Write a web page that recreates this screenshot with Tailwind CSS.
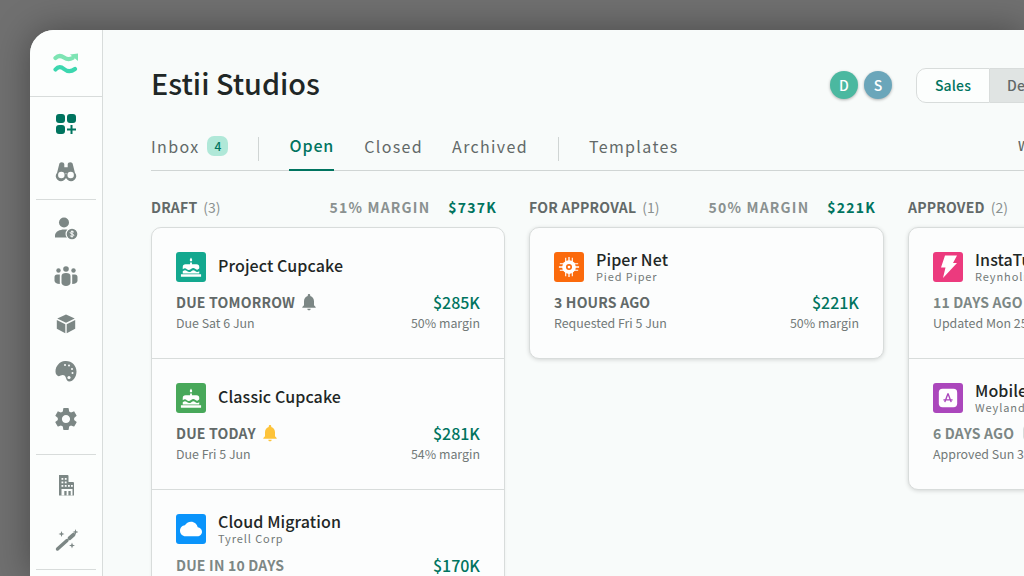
<!DOCTYPE html>
<html lang="en">
<head>
<meta charset="utf-8">
<title>Estii Studios</title>
<script src="https://cdn.jsdelivr.net/npm/@tailwindcss/browser@4"></script>
</head>
<body class="m-0 w-[1024px] h-[576px] overflow-hidden bg-[#707070] font-['Noto_Sans_CJK_SC','Noto_Sans',sans-serif]">
<div class="pl-[30px] pt-[30px] w-[1024px] h-[576px]">
  <div class="w-[994px] h-[546px] flex rounded-tl-[24px] bg-[#f8fbfa] shadow-[0_0_36px_rgba(0,0,0,0.35)] overflow-hidden">
    <!-- sidebar -->
    <aside class="w-[73px] shrink-0 bg-[#fcfefd] border-r border-[#d8dcdb] flex flex-col">
      <div class="h-[67px] shrink-0 border-b border-[#d8dcdb] flex items-center justify-center">
        <svg class="w-[26px] h-6" viewBox="0 0 26 24" fill="none" stroke-linecap="round">
          <path d="M2.500 7C5 4.500 8 4.500 11 6.500s5 2.500 8.500.5" stroke="#7de4b3" stroke-width="4.200"/>
          <path d="M17 3.500 25 2.500V10z" fill="#7de4b3"/>
          <path d="M2.500 18.500C5 15.500 8 15.500 11 18s7 3 11 0" stroke="#3cd7af" stroke-width="4.200"/>
        </svg>
      </div>
      <div class="flex flex-col items-center pt-[15px]">
        <svg class="w-6 h-6" viewBox="0 0 24 24" fill="#00745f">
          <rect x="2" y="2" width="9" height="9" rx="3"/><rect x="13" y="2" width="9" height="9" rx="3"/><rect x="2" y="13" width="9" height="9" rx="3"/>
          <path d="M16.500 13h2v3.500H22v2h-3.500V22h-2v-3.500H13v-2h3.500z"/>
        </svg>
        <svg class="w-6 h-6 mt-[23px]" viewBox="0 0 24 24" fill="#7c8785">
          <g transform="translate(1.800 1.500) scale(.85)">
            <path d="M4 4.500C4 3 5.500 2 7 2s3 1 3 2.500V8h4V4.500C14 3 15.500 2 17 2s3 1 3 2.500L22.500 14.500A6 6 0 1 1 12.800 15h-1.600A6 6 0 1 1 1.500 14.500z"/>
            <circle cx="6.500" cy="17" r="3.800" fill="#fcfefd"/><circle cx="17.500" cy="17" r="3.800" fill="#fcfefd"/>
          </g>
        </svg>
        <div class="w-[60px] h-px bg-[#d8dcdb] mt-4"></div>
        <svg class="w-6 h-6 mt-4" viewBox="0 0 24 24" fill="#7c8785">
          <circle cx="10" cy="6.500" r="5"/><path d="M1 21.500v-2C1 15.500 6 13.500 10 13.500s5 .5 6 1L13 21.500z"/>
          <circle cx="18" cy="18" r="6.500" fill="#fcfefd"/><circle cx="18" cy="18" r="5.300"/>
          <path d="M20 16.300c-.5-.8-3.500-1.100-3.800.3-.3 1.600 3.700.9 3.600 2.700-.1 1.400-3.200 1.300-3.900.3M18 14.500v7" stroke="#fcfefd" stroke-width="1" fill="none"/>
        </svg>
        <svg class="w-6 h-6 mt-6" viewBox="0 0 24 24" fill="#7c8785">
          <circle cx="12" cy="5" r="2.800"/><circle cx="4.500" cy="6.500" r="2.200"/><circle cx="19.500" cy="6.500" r="2.200"/>
          <path d="M7.500 12c0-2 1.500-3 4.500-3s4.500 1 4.500 3v6.500c0 2-2 3.500-4.500 3.500s-4.500-1.500-4.500-3.500z"/>
          <path d="M5.800 10.500H3C1.500 10.500.5 11.500.5 13v3.500c0 2 2 3.500 5.300 3.500z"/>
          <path d="M18.200 10.500H21c1.500 0 2.500 1 2.500 2.500v3.500c0 2-2 3.500-5.300 3.500z"/>
        </svg>
        <svg class="w-6 h-6 mt-6" viewBox="0 0 24 24" fill="#7c8785">
          <g transform="translate(1.500 1.500) scale(.875)">
            <path d="M12 1 22 5.800 12 10.600 2 5.800z"/>
            <path d="M1.500 7.500v10l9.700 5V12.200z"/>
            <path d="M22.500 7.500v10l-9.700 5V12.200z"/>
          </g>
        </svg>
        <svg class="w-6 h-6 mt-[23px]" viewBox="0 0 24 24" fill="#7c8785">
          <path d="M11 2c6.500-.5 11.500 4.500 11.500 10.500 0 5.500-3.500 10-7 10-2.500 0-3-2-3.500-3.500-.6-1.800-1.500-3-3.300-3-1.500 0-2.500 1.200-4.200 1.200C2.800 16.700 1.500 15 1.500 12.500 1.500 7 5.500 2.500 11 2z"/>
          <circle cx="11" cy="6" r="1" fill="#fcfefd"/><circle cx="15" cy="6.500" r="1" fill="#fcfefd"/><circle cx="18" cy="10" r="1" fill="#fcfefd"/><circle cx="18.500" cy="14" r="1" fill="#fcfefd"/><circle cx="15" cy="18.500" r="1.600" fill="#fcfefd"/>
        </svg>
        <svg class="w-6 h-6 mt-6" viewBox="0 0 24 24" fill="#7c8785">
          <path d="M19.140 12.940c.04-.3.06-.61.06-.94 0-.32-.02-.64-.07-.94l2.030-1.580c.18-.14.23-.41.12-.61l-1.920-3.320c-.12-.22-.37-.29-.59-.22l-2.390.96c-.5-.38-1.030-.7-1.620-.94l-.36-2.540c-.04-.24-.24-.41-.48-.41h-3.840c-.24 0-.43.17-.47.41l-.36 2.540c-.59.24-1.130.57-1.620.94l-2.390-.96c-.22-.08-.47 0-.59.22L2.740 8.870c-.12.21-.08.47.12.61l2.030 1.580c-.05.3-.09.63-.09.94s.02.64.07.94l-2.030 1.580c-.18.14-.23.41-.12.61l1.920 3.320c.12.22.37.29.59.22l2.390-.96c.5.38 1.030.7 1.620.94l.36 2.540c.05.24.24.41.48.41h3.840c.24 0 .44-.17.47-.41l.36-2.540c.59-.24 1.130-.56 1.620-.94l2.390.96c.22.08.47 0 .59-.22l1.920-3.320c.12-.22.07-.47-.12-.61l-2.010-1.580zM12 15.600c-1.980 0-3.600-1.620-3.600-3.600s1.620-3.600 3.600-3.600 3.600 1.620 3.600 3.600-1.620 3.600-3.600 3.600z" transform="translate(-1.700 -1.700) scale(1.140)"/>
        </svg>
        <div class="w-[60px] h-px bg-[#d8dcdb] mt-[23px]"></div>
        <svg class="w-6 h-6 mt-[18px]" viewBox="0 0 24 24" fill="#7c8785">
          <path d="M5 2h8.500a1 1 0 0 1 1 1v6H19a1 1 0 0 1 1 1v12.500H5z"/>
          <g fill="#fcfefd">
            <rect x="7.500" y="5" width="1.800" height="1.800"/><rect x="10.800" y="5" width="1.800" height="1.800"/><rect x="7.500" y="8.500" width="1.800" height="1.800"/><rect x="10.800" y="8.500" width="1.800" height="1.800"/><rect x="7.500" y="12" width="1.800" height="1.800"/><rect x="10.800" y="12" width="1.800" height="1.800"/><rect x="14" y="12" width="1.800" height="1.800"/><rect x="17" y="12" width="1.800" height="1.800"/>
            <path d="M7.500 16h11v6.500h-1.800V18h-2.300v4.500h-1.800V18h-2.300v4.500H7.500z"/>
          </g>
        </svg>
        <svg class="w-6 h-6 mt-[31px]" viewBox="0 0 24 24" fill="#7c8785">
          <path d="M3.500 21 13 12.500" stroke="#7c8785" stroke-width="3.400" stroke-linecap="round" fill="none"/>
          <path d="M15.500 10.300 19.500 6.800" stroke="#7c8785" stroke-width="3.800" stroke-linecap="round" fill="none"/>
          <path d="M7.500 3 8.300 5.200 10.500 6 8.300 6.800 7.500 9 6.700 6.800 4.500 6 6.700 5.200zM21.500 1l.7 2.300 2.300.7-2.300.7-.7 2.300-.7-2.300L18.500 4l2.300-.7zM18 14.500l.8 2.200 2.200.8-2.200.8-.8 2.200-.8-2.200-2.200-.8 2.200-.8z"/>
        </svg>
        <div class="w-[60px] h-px bg-[#d8dcdb] mt-[17px]"></div>
      </div>
    </aside>

    <!-- main -->
    <main class="w-[921px] shrink-0 pl-12 overflow-hidden">
      <header class="h-[38px] mt-[34px] flex items-center">
        <h1 class="m-0 text-[28.8px] leading-[38px] font-medium text-[#1f2726]">Estii Studios</h1>
        <div class="ml-auto mt-1 flex gap-[6px] mr-[24px]">
          <div class="w-7 h-7 rounded-full bg-[#4bb8a0] text-white text-sm font-medium flex items-center justify-center shadow-[0_1px_3px_rgba(0,0,0,0.3)]">D</div>
          <div class="w-7 h-7 rounded-full bg-[#6ba6ba] text-white text-sm font-medium flex items-center justify-center shadow-[0_1px_3px_rgba(0,0,0,0.3)]">S</div>
        </div>
        <div class="w-[108px] mt-1 shrink-0 flex overflow-hidden">
          <div class="w-[74px] h-[35px] shrink-0 flex items-center justify-center rounded-l-[10px] border border-[#d8dcdb] bg-[#fcfefd] text-[14px] tracking-[0.15px] font-medium text-[#00745f]">Sales</div>
          <div class="w-[80px] h-[35px] shrink-0 pl-[17px] flex items-center border-y border-[#d8dcdb] bg-[#e0e4e3] text-[14px] tracking-[0.15px] font-medium text-[#626968]">Delivery</div>
        </div>
      </header>

      <nav class="h-[45px] mt-6 flex items-stretch border-b border-[#d0d5d4] text-[16px] tracking-[1.35px] text-[#626968] font-normal">
        <div class="flex items-center pb-[5px]">Inbox<span class="ml-[8px] w-[21px] h-[20px] rounded-[7px] bg-[#b0e8d8] text-[12px] font-medium text-[#00745f] tracking-normal flex items-center justify-center">4</span></div>
        <div class="w-px h-[24px] mt-[11px] bg-[#d0d5d4] ml-[30px] mr-[30px]"></div>
        <div class="flex items-center pb-[5px] -mb-px border-b-2 border-[#00745f] text-[#00745f] font-medium tracking-[0.9px]">Open</div>
        <div class="flex items-center pb-[5px] ml-[30px]">Closed</div>
        <div class="flex items-center pb-[5px] ml-[29px]">Archived</div>
        <div class="w-px h-[24px] mt-[11px] bg-[#d0d5d4] ml-[30px] mr-[30px]"></div>
        <div class="flex items-center pb-[5px]">Templates</div>
        <div class="ml-auto w-[6px] overflow-hidden whitespace-nowrap flex items-center pb-[5px] text-[13px] font-medium">Week</div>
      </nav>

      <section class="flex gap-6 mt-[24px] w-[1200px]">
        <!-- Draft -->
        <div class="w-[354px] shrink-0">
          <div class="h-[24px] flex items-center text-[14px]">
            <span class="font-bold text-[#626968] tracking-[0.2px]">DRAFT</span><span class="ml-[6px] text-[#8a9190]">(3)</span>
            <span class="ml-auto font-bold text-[#8a9190] tracking-[1.2px]">51% MARGIN</span><span class="ml-[18px] mr-[8px] font-bold text-[#00745f] tracking-[1.2px]">$737K</span>
          </div>
          <div class="mt-[8px] rounded-[10px] border border-[#d8dcdb] bg-[#fcfdfd] shadow-[0_1px_3px_rgba(0,0,0,0.06)]">
            <article class="h-[131px] px-6 pt-6 border-b border-[#d8dcdb]">
              <div class="flex items-center gap-3 h-[30px]">
                <div class="w-[30px] h-[30px] rounded-[3px] bg-[#13a88f] flex items-center justify-center shrink-0">
                  <svg class="w-[22px] h-[22px]" viewBox="0 0 24 24" fill="#fff"><path d="M12 1.500c1 1.500 1.300 2.200 1.300 3a1.300 1.300 0 0 1-2.600 0c0-.8.300-1.500 1.300-3zM11 7h2v2h5a3 3 0 0 1 3 3v1.300c-1.800 2-3 2-4.500.7-1.300-1.200-2.800-1.200-4.500.2-1.700 1.400-3.200 1.400-4.500.2C6 13 4.800 13 3 14.500V12a3 3 0 0 1 3-3h5z"/><path d="M3 16.500c1.800-1.300 3-1.500 4.500-.2 1.800 1.500 3.200 1.500 4.900.2 1.500-1.200 2.800-1.300 4.100-.2 1.600 1.400 3 1.300 4.500.2V19H3zM1 20h22v2.500H1z"/></svg>
                </div>
                <div class="-mt-1 text-[16px] tracking-[0.1px] leading-[22px] font-medium text-[#1f2726]">Project Cupcake</div>
              </div>
              <div class="mt-[8px] flex justify-between">
                <div>
                  <div class="h-[24px] flex items-center text-[14px] tracking-[0.2px] font-bold text-[#626968]">DUE TOMORROW<svg class="w-5 h-5 ml-1" viewBox="0 0 24 24" fill="#7c8785"><path d="M12 22c1.100 0 2-.9 2-2h-4c0 1.100.89 2 2 2zm6-6v-5c0-3.070-1.640-5.640-4.500-6.320V4c0-.83-.67-1.500-1.500-1.500s-1.500.67-1.500 1.500v.68C7.630 5.360 6 7.920 6 11v5l-2 2v1h16v-1l-2-2z"/></svg></div>
                  <div class="h-[18px] flex items-center text-[12.4px] text-[#727978]">Due Sat 6 Jun</div>
                </div>
                <div class="text-right">
                  <div class="h-[24px] flex items-center justify-end text-[16px] font-medium text-[#00745f]">$285K</div>
                  <div class="h-[18px] flex items-center justify-end text-[12.4px] text-[#727978]">50% margin</div>
                </div>
              </div>
            </article>
            <article class="h-[131px] px-6 pt-6 border-b border-[#d8dcdb]">
              <div class="flex items-center gap-3 h-[30px]">
                <div class="w-[30px] h-[30px] rounded-[3px] bg-[#48a85a] flex items-center justify-center shrink-0">
                  <svg class="w-[22px] h-[22px]" viewBox="0 0 24 24" fill="#fff"><path d="M12 1.500c1 1.500 1.300 2.200 1.300 3a1.300 1.300 0 0 1-2.600 0c0-.8.300-1.500 1.300-3zM11 7h2v2h5a3 3 0 0 1 3 3v1.300c-1.800 2-3 2-4.500.7-1.300-1.200-2.800-1.200-4.500.2-1.700 1.400-3.200 1.400-4.500.2C6 13 4.800 13 3 14.500V12a3 3 0 0 1 3-3h5z"/><path d="M3 16.500c1.800-1.300 3-1.500 4.500-.2 1.800 1.500 3.200 1.500 4.900.2 1.500-1.200 2.800-1.300 4.100-.2 1.600 1.400 3 1.300 4.500.2V19H3zM1 20h22v2.500H1z"/></svg>
                </div>
                <div class="-mt-1 text-[16px] tracking-[0.1px] leading-[22px] font-medium text-[#1f2726]">Classic Cupcake</div>
              </div>
              <div class="mt-[8px] flex justify-between">
                <div>
                  <div class="h-[24px] flex items-center text-[14px] tracking-[0.2px] font-bold text-[#626968]">DUE TODAY<svg class="w-5 h-5 ml-1" viewBox="0 0 24 24" fill="#fdc33a"><path d="M12 22c1.100 0 2-.9 2-2h-4c0 1.100.89 2 2 2zm6-6v-5c0-3.070-1.640-5.640-4.500-6.320V4c0-.83-.67-1.500-1.500-1.500s-1.500.67-1.500 1.500v.68C7.630 5.360 6 7.920 6 11v5l-2 2v1h16v-1l-2-2z"/></svg></div>
                  <div class="h-[18px] flex items-center text-[12.4px] text-[#727978]">Due Fri 5 Jun</div>
                </div>
                <div class="text-right">
                  <div class="h-[24px] flex items-center justify-end text-[16px] font-medium text-[#00745f]">$281K</div>
                  <div class="h-[18px] flex items-center justify-end text-[12.4px] text-[#727978]">54% margin</div>
                </div>
              </div>
            </article>
            <article class="h-[131px] px-6 pt-6">
              <div class="flex items-center gap-3 h-[30px]">
                <div class="w-[30px] h-[30px] rounded-[3px] bg-[#0a94fb] flex items-center justify-center shrink-0">
                  <svg class="w-[22px] h-[22px]" viewBox="0 0 24 24" fill="#fff"><path d="M19.350 10.040C18.670 6.590 15.640 4 12 4 9.110 4 6.600 5.640 5.350 8.040 2.340 8.360 0 10.910 0 14c0 3.310 2.690 6 6 6h13c2.760 0 5-2.240 5-5 0-2.640-2.050-4.780-4.650-4.960z"/></svg>
                </div>
                <div class="-mt-1">
                  <div class="text-[16px] tracking-[0.1px] leading-[20px] font-medium text-[#1f2726]">Cloud Migration</div>
                  <div class="mt-[1px] text-[11px] leading-[12px] tracking-[0.9px] text-[#727978]">Tyrell Corp</div>
                </div>
              </div>
              <div class="mt-[9px] flex justify-between">
                <div class="h-[24px] flex items-center text-[14px] tracking-[0.2px] font-bold text-[#7c8785]">DUE IN 10 DAYS</div>
                <div class="h-[24px] flex items-center justify-end text-[16px] font-medium text-[#00745f]">$170K</div>
              </div>
            </article>
          </div>
        </div>

        <!-- For approval -->
        <div class="w-[355px] shrink-0">
          <div class="h-[24px] flex items-center text-[14px]">
            <span class="font-bold text-[#626968] tracking-[0.2px]">FOR APPROVAL</span><span class="ml-[6px] text-[#8a9190]">(1)</span>
            <span class="ml-auto font-bold text-[#8a9190] tracking-[1.2px]">50% MARGIN</span><span class="ml-[18px] mr-[8px] font-bold text-[#00745f] tracking-[1.2px]">$221K</span>
          </div>
          <div class="mt-[8px] rounded-[10px] border border-[#d8dcdb] bg-[#fcfdfd] shadow-[0_1px_4px_rgba(0,0,0,0.15)]">
            <article class="h-[130px] px-6 pt-6">
              <div class="flex items-center gap-3 h-[30px]">
                <div class="w-[30px] h-[30px] rounded-[3px] bg-[#fb6a0c] flex items-center justify-center shrink-0">
                  <svg class="w-[22px] h-[22px]" viewBox="0 0 24 24" fill="#fff"><circle cx="12" cy="12" r="7.500"/><path d="M11.300 1h1.400v22h-1.400zM1 11.300h22v1.400H1z"/><path d="M7.800 2h1.200v20H7.800zM15 2h1.200v20H15zM2 7.800h20v1.200H2zM2 15h20v1.200H2z"/><circle cx="12" cy="12" r="3.300" fill="#fb6a0c"/><circle cx="12" cy="12" r="1.500"/></svg>
                </div>
                <div class="-mt-1">
                  <div class="text-[16px] tracking-[0.1px] leading-[20px] font-medium text-[#1f2726]">Piper Net</div>
                  <div class="mt-[1px] text-[11px] leading-[12px] tracking-[0.9px] text-[#727978]">Pied Piper</div>
                </div>
              </div>
              <div class="mt-[8px] flex justify-between">
                <div>
                  <div class="h-[24px] flex items-center text-[14px] tracking-[0.2px] font-bold text-[#626968]">3 HOURS AGO</div>
                  <div class="h-[18px] flex items-center text-[12.4px] text-[#727978]">Requested Fri 5 Jun</div>
                </div>
                <div class="text-right">
                  <div class="h-[24px] flex items-center justify-end text-[16px] font-medium text-[#00745f]">$221K</div>
                  <div class="h-[18px] flex items-center justify-end text-[12.4px] text-[#727978]">50% margin</div>
                </div>
              </div>
            </article>
          </div>
        </div>

        <!-- Approved -->
        <div class="w-[355px] shrink-0">
          <div class="h-[24px] flex items-center text-[14px]">
            <span class="font-bold text-[#626968] tracking-[0.2px]">APPROVED</span><span class="ml-[6px] text-[#8a9190]">(2)</span>
          </div>
          <div class="mt-[8px] rounded-[10px] border border-[#d8dcdb] bg-[#fcfdfd] shadow-[0_1px_4px_rgba(0,0,0,0.15)]">
            <article class="h-[131px] px-6 pt-6 border-b border-[#d8dcdb]">
              <div class="flex items-center gap-3 h-[30px]">
                <div class="w-[30px] h-[30px] rounded-[3px] bg-[#ec3a7e] flex items-start justify-center shrink-0 pt-[3px]">
                  <svg class="w-[24px] h-[24px]" viewBox="0 0 24 24" fill="#fff"><path d="M9 .5h12l-4 7.500h4L7 23l2.500-10.500H5z"/></svg>
                </div>
                <div class="-mt-1">
                  <div class="text-[16px] tracking-[0.1px] leading-[20px] font-medium text-[#1f2726]">InstaTube</div>
                  <div class="mt-[1px] text-[11px] leading-[12px] tracking-[0.9px] text-[#727978] whitespace-nowrap">Reynholm Industries</div>
                </div>
              </div>
              <div class="mt-[8px]">
                <div class="h-[24px] flex items-center text-[14px] tracking-[0.2px] font-bold text-[#7c8785]">11 DAYS AGO</div>
                <div class="h-[18px] flex items-center text-[12.4px] text-[#727978]">Updated Mon 25 May</div>
              </div>
            </article>
            <article class="h-[130px] px-6 pt-6">
              <div class="flex items-center gap-3 h-[30px]">
                <div class="w-[30px] h-[30px] rounded-[3px] bg-[#ab47bc] flex items-center justify-center shrink-0">
                  <svg class="w-[22px] h-[22px]" viewBox="0 0 24 24"><rect x="2" y="2" width="20" height="20" rx="4" fill="#fff"/><path d="M12 7 8.500 16.500M12 7l3.500 9.500M7 14h10" stroke="#ab47bc" stroke-width="1.500" fill="none"/></svg>
                </div>
                <div class="-mt-1">
                  <div class="text-[16px] tracking-[0.1px] leading-[20px] font-medium text-[#1f2726]">Mobile App</div>
                  <div class="mt-[1px] text-[11px] leading-[12px] tracking-[0.9px] text-[#727978] whitespace-nowrap">Weyland Yutani</div>
                </div>
              </div>
              <div class="mt-[8px]">
                <div class="h-[24px] flex items-center text-[14px] tracking-[0.2px] font-bold text-[#7c8785]">6 DAYS AGO<span class="ml-[9px] w-4 h-4 rounded-[4px] border border-[#d8dcdb]"></span></div>
                <div class="h-[18px] flex items-center text-[12.4px] text-[#727978]">Approved Sun 31 May</div>
              </div>
            </article>
          </div>
        </div>
      </section>
    </main>
  </div>
</div>
</body>
</html>
